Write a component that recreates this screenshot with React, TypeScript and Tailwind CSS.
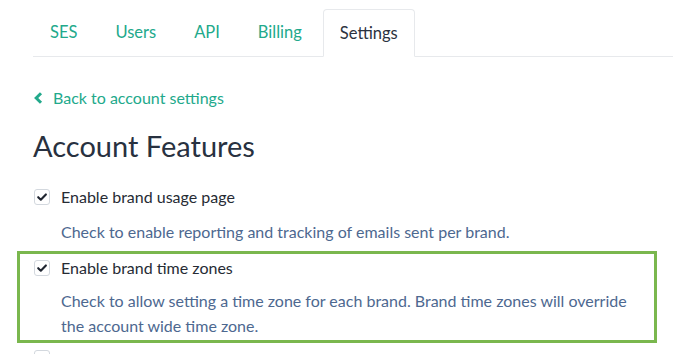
import React from 'react';

const tabs = ['SES', 'Users', 'API', 'Billing', 'Settings'];

function CheckBox() {
  return (
    <span className="flex h-4 w-4 shrink-0 items-center justify-center rounded-[3px] border border-[#d3d8de] bg-white">
      <svg width="12" height="12" viewBox="0 0 12 12" fill="none">
        <path d="M2.2 6.2 L4.8 8.7 L9.9 3.4" stroke="#1f2530" strokeWidth="2.1" strokeLinecap="round" strokeLinejoin="round" />
      </svg>
    </span>
  );
}

function Feature({ label }: { label: string }) {
  return (
    <label className="flex h-6 items-center gap-[11px] text-[16px] text-[#262b34]">
      <CheckBox />
      <span>{label}</span>
    </label>
  );
}

export default function App() {
  return (
    <div className="h-[354px] w-[673px] overflow-hidden bg-white" style={{ fontFamily: 'Lato, "Open Sans", sans-serif' }}>
      <nav className="ml-[33px] mt-[9px] flex gap-[4px] border-b border-[#e7e9ec]">
        {tabs.map((t) => (
          <a
            key={t}
            className={
              t === 'Settings'
                ? '-mb-px flex h-[48px] items-center rounded-t-[4px] border border-[#e7e9ec] border-b-white bg-white px-[16px] text-[16.5px] text-[#2b3240]'
                : 'flex h-[47px] items-center px-[17px] text-[16.5px] text-[#22a98b]'
            }
          >
            {t}
          </a>
        ))}
      </nav>

      <div className="pl-[34px]">
        <a className="mt-[29px] flex h-6 items-center gap-[10px] text-[16px] text-[#22a98b]">
          <svg width="9" height="12" viewBox="0 0 9 12" fill="none">
            <path d="M7 1.3 L2.2 6 L7 10.7" stroke="#22a98b" strokeWidth="3" strokeLinejoin="miter" />
          </svg>
          <span>Back to account settings</span>
        </a>

        <h1 className="mt-[18px] -ml-[1px] text-[29px] leading-[36px] text-[#283140]">Account Features</h1>

        <div className="mt-[21px]">
          <Feature label="Enable brand usage page" />
          <p className="ml-[27px] mt-[10px] text-[16px] leading-[25px] text-[#4d6890]">
            Check to enable reporting and tracking of emails sent per brand.
          </p>
        </div>
      </div>

      <div className="ml-[17px] mt-[7px] w-[640px] border-[3px] border-[#7ab74e] pb-[2px] pl-[14px] pt-[2px]">
        <Feature label="Enable brand time zones" />
        <p className="ml-[27px] mt-[8px] max-w-[575px] text-[16px] leading-[25px] text-[#4d6890]">
          Check to allow setting a time zone for each brand. Brand time zones will override the account wide time zone.
        </p>
      </div>

      <div className="ml-[34px] mt-[7px]">
        <span className="block h-4 w-4 rounded-[3px] border border-[#d3d8de]" />
      </div>
    </div>
  );
}
